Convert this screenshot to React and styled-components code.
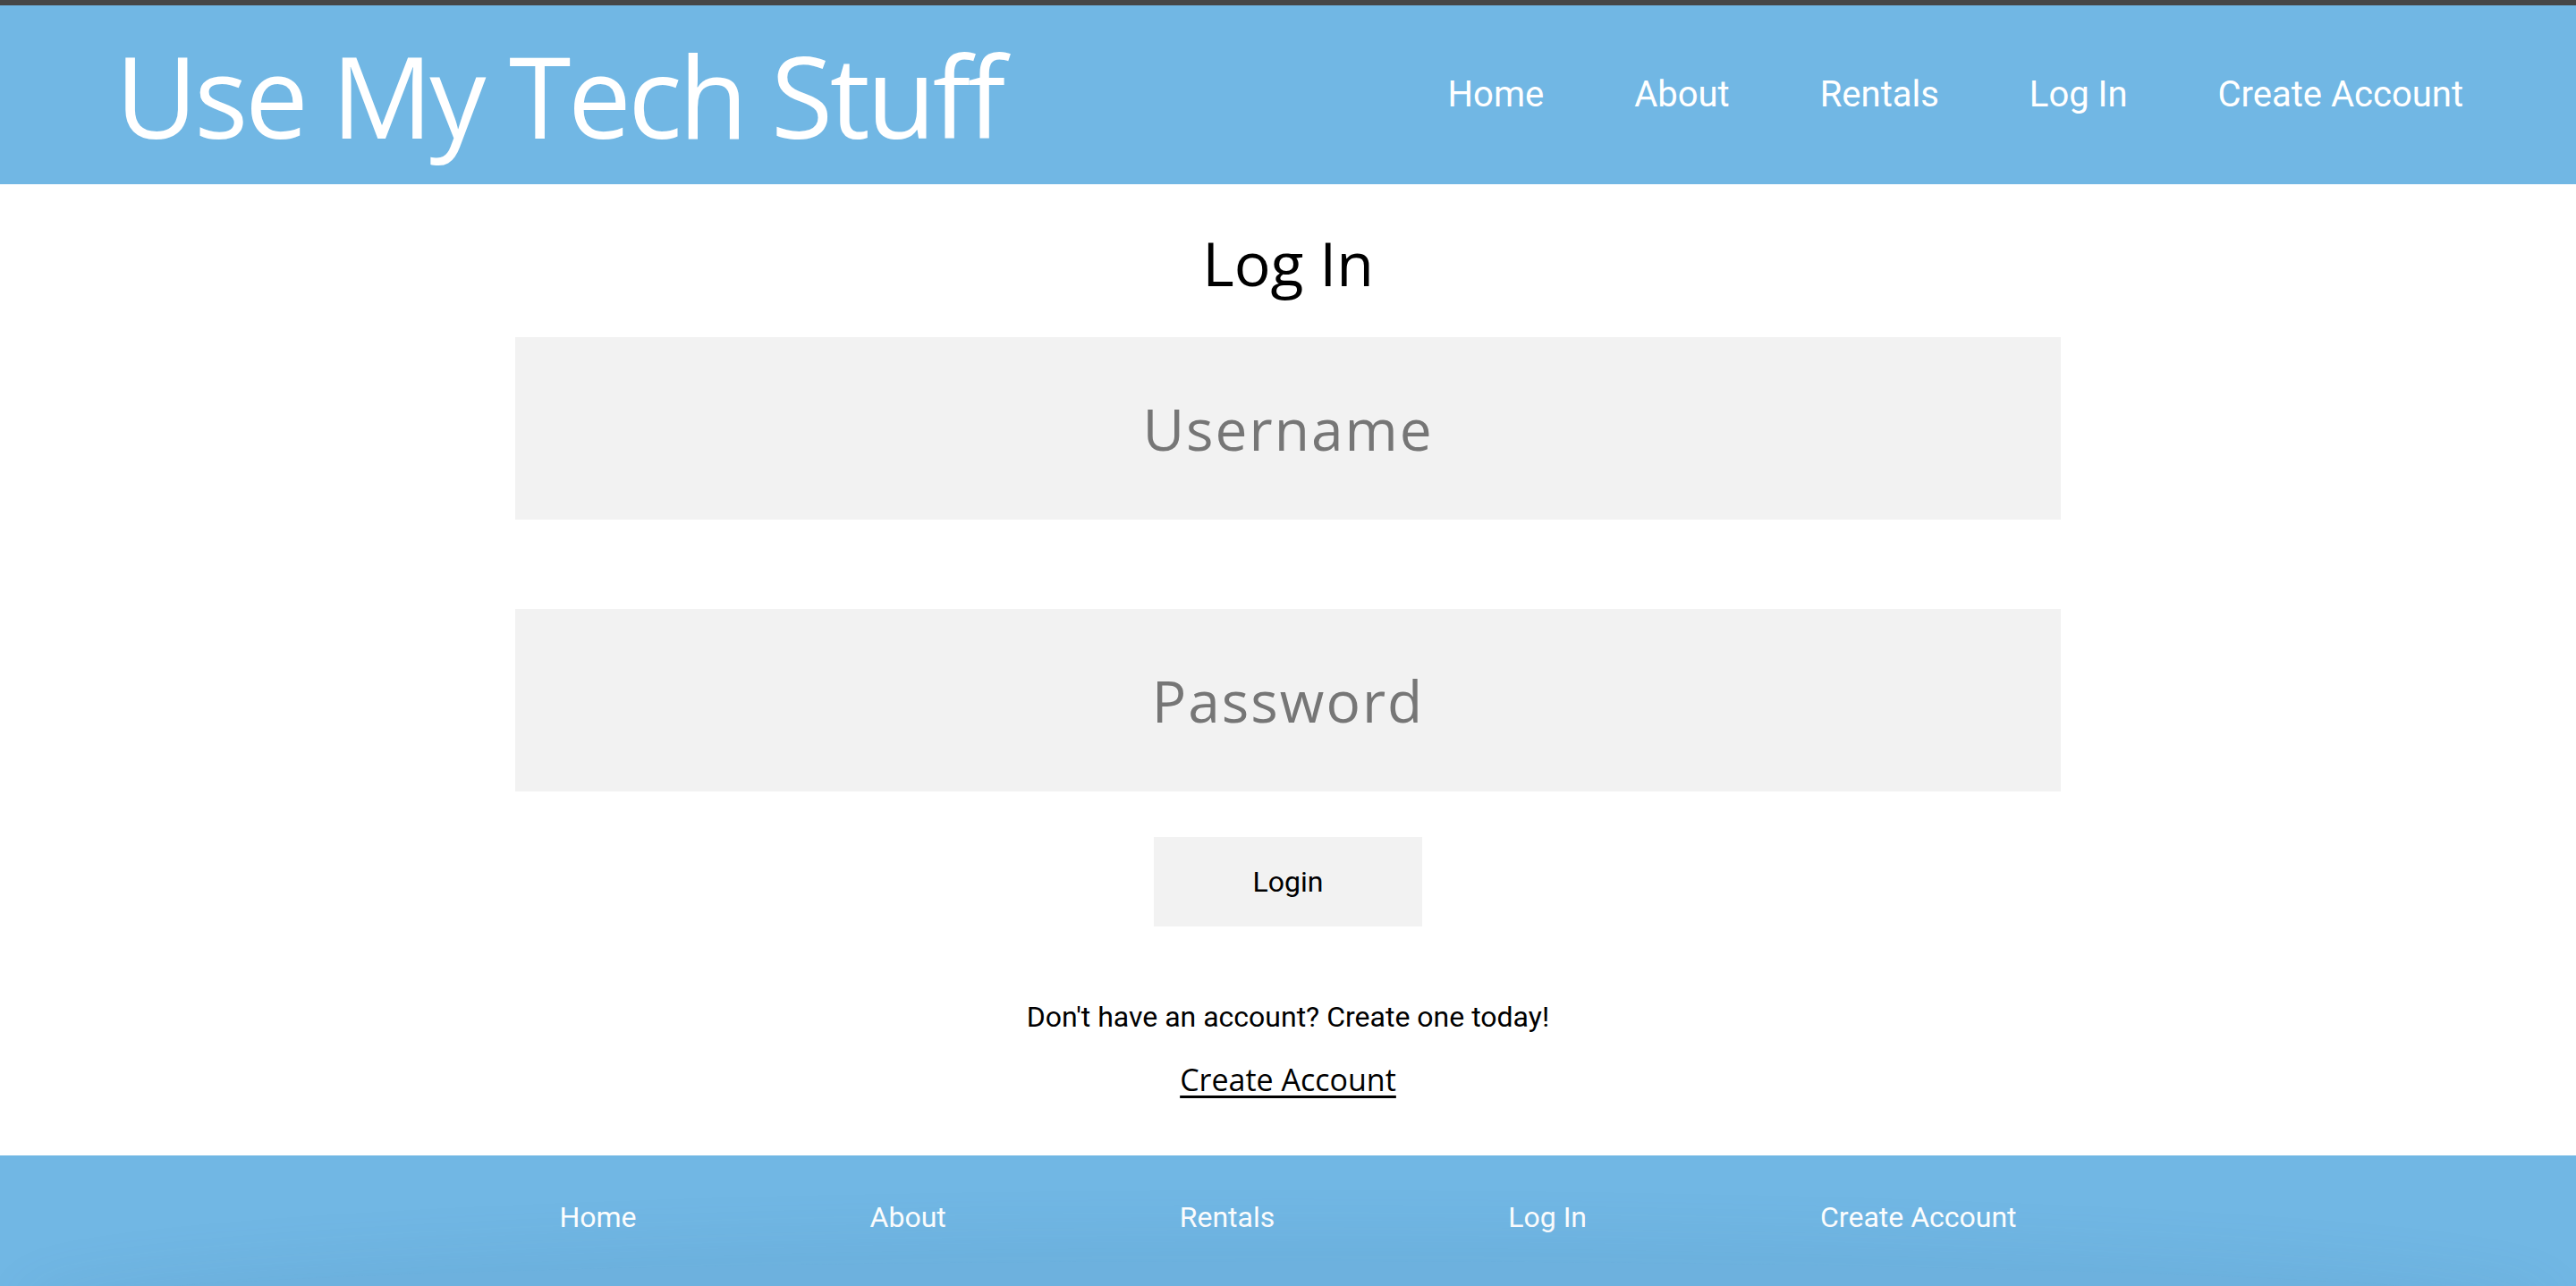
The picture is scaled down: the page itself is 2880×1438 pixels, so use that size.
import React from 'react';
import styled, { createGlobalStyle } from 'styled-components';

const GlobalStyle = createGlobalStyle`
  * {
    box-sizing: border-box;
  }
  body {
    margin: 0;
    background: #ffffff;
    font-family: Roboto, "Liberation Sans", sans-serif;
  }
`;

const blue = '#71b7e4';

const Page = styled.div`
  min-height: 1438px;
  display: flex;
  flex-direction: column;
  border-top: 6px solid #464646;
`;

const Header = styled.header`
  height: 200px;
  background: ${blue};
  display: flex;
  align-items: center;
  justify-content: space-between;
  padding: 0 126px 0 129px;
`;

const Logo = styled.h1`
  margin: 0;
  font-family: "Open Sans", sans-serif;
  font-weight: 400;
  font-size: 126px;
  letter-spacing: -3.5px;
  line-height: 1;
  color: #ffffff;
`;

const Nav = styled.nav`
  display: flex;
  align-items: center;
  gap: ${(p) => p.gap}px;
`;

const NavLink = styled.a`
  font-family: Roboto, sans-serif;
  font-size: ${(p) => p.size}px;
  line-height: 1.2;
  color: #ffffff;
  text-decoration: none;
  cursor: pointer;
`;

const Main = styled.main`
  flex: 1;
  display: flex;
  flex-direction: column;
  align-items: center;
`;

const Title = styled.h2`
  margin: 42px 0 38px;
  font-family: "Open Sans", sans-serif;
  font-weight: 400;
  font-size: 68px;
  line-height: 91px;
  color: #000000;
`;

const Fields = styled.form`
  width: 60%;
  display: flex;
  flex-direction: column;
  gap: 100px;
`;

const Input = styled.input`
  width: 100%;
  height: 204px;
  border: none;
  outline: none;
  background: #f2f2f2;
  text-align: center;
  font-family: "Open Sans", sans-serif;
  font-size: 64px;
  letter-spacing: 2px;
  color: #333333;

  &::placeholder {
    color: #767676;
  }
`;

const Button = styled.button`
  width: 300px;
  height: 100px;
  margin-top: 51px;
  border: none;
  background: #f2f2f2;
  font-family: Roboto, sans-serif;
  font-size: 32px;
  color: #000000;
  cursor: pointer;
`;

const Prompt = styled.p`
  margin: 82px 0 0;
  font-family: Roboto, sans-serif;
  font-size: 32px;
  line-height: 38px;
  color: #000000;
`;

const SignupLink = styled.a`
  margin-top: 30px;
  font-family: "Open Sans", sans-serif;
  font-size: 34px;
  line-height: 42px;
  color: #000000;
  text-decoration: underline;
  text-underline-offset: 5px;
  cursor: pointer;
`;

const Footer = styled.footer`
  position: relative;
  margin-top: 64px;
  height: 148px;
  background: ${blue};
  display: flex;
  align-items: flex-start;
  justify-content: center;
  padding-top: 50px;
  overflow: hidden;

  &::after {
    content: '';
    position: absolute;
    left: 50px;
    right: 50px;
    bottom: -70px;
    height: 100px;
    border-radius: 50%;
    box-shadow: 0 0 60px 30px rgba(60, 110, 150, 0.09);
    background: rgba(60, 110, 150, 0.08);
    pointer-events: none;
  }
`;

const links = ['Home', 'About', 'Rentals', 'Log In', 'Create Account'];

const App = () => {
  return (
    <Page>
      <GlobalStyle />
      <Header>
        <Logo>Use My Tech Stuff</Logo>
        <Nav gap={101}>
          {links.map((item) => (
            <NavLink key={item} size={40}>
              {item}
            </NavLink>
          ))}
        </Nav>
      </Header>
      <Main>
        <Title>Log In</Title>
        <Fields onSubmit={(e) => e.preventDefault()}>
          <Input type="text" placeholder="Username" />
          <Input type="password" placeholder="Password" />
        </Fields>
        <Button type="button">Login</Button>
        <Prompt>Don't have an account? Create one today!</Prompt>
        <SignupLink>Create Account</SignupLink>
      </Main>
      <Footer>
        <Nav gap={261}>
          {links.map((item) => (
            <NavLink key={item} size={32}>
              {item}
            </NavLink>
          ))}
        </Nav>
      </Footer>
    </Page>
  );
};

export default App;
